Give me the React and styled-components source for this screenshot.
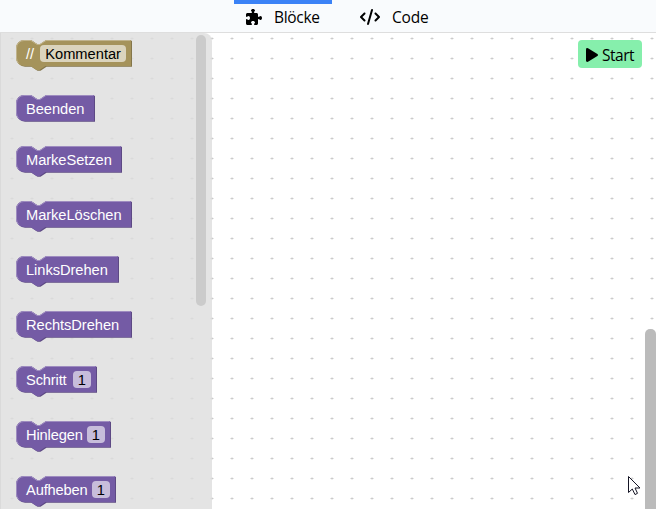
import React from "react";
import styled, { createGlobalStyle } from "styled-components";
import { FaPuzzlePiece, FaCode } from "react-icons/fa6";

const GlobalStyle = createGlobalStyle`
  * { box-sizing: border-box; }
  body { margin: 0; overflow: hidden; background: #fff; }
`;

const Page = styled.div`
  display: flex;
  flex-direction: column;
  width: 656px;
  height: 509px;
  overflow: hidden;
  font-family: "Open Sans", "Noto Sans", sans-serif;
  color: #000;
`;

const TabBar = styled.nav`
  display: flex;
  flex: none;
  gap: 16px;
  height: 33px;
  padding-left: 234px;
  background: #f9fbfd;
  border-bottom: 1px solid #dedede;
`;

const Tab = styled.button`
  display: flex;
  align-items: center;
  width: ${(p) => p.$width}px;
  height: 32px;
  padding: 0 0 1px ${(p) => p.$inset}px;
  border: 0;
  border-top: 4px solid ${(p) => (p.$active ? "#3b82f6" : "transparent")};
  background: none;
  color: inherit;
  font: 15.5px/24px "Open Sans", "Noto Sans", sans-serif;
  letter-spacing: ${(p) => p.$spacing}px;
  white-space: nowrap;
`;

const TabIcon = styled.span`
  display: flex;
  flex: none;
  justify-content: center;
  width: ${(p) => p.$width}px;
  margin: 0 ${(p) => p.$gap}px 1px 0;
  font-size: 16px;
`;

const TabLabel = styled.span`
  height: 26px;
`;

const Workspace = styled.main`
  position: relative;
  display: flex;
  flex: 1;
  min-height: 0;
  justify-content: space-between;
  background: #fff;
`;

const GridDots = styled.svg`
  position: absolute;
  inset: 0;
  width: 100%;
  height: 100%;
`;

const Flyout = styled.aside`
  position: relative;
  display: flex;
  justify-content: space-between;
  width: 211.5px;
  height: 476px;
  padding: 7px 5.5px 0 15px;
  overflow: hidden;
  background: rgba(221, 221, 221, 0.8);
  border-left: 1px solid #dadada;
  border-radius: 0 8px 0 0;
`;

const BlockList = styled.div`
  display: flex;
  flex-direction: column;
  align-items: flex-start;
  gap: 24px;
`;

const Block = styled.div`
  position: relative;
  display: flex;
  flex: none;
  align-items: flex-start;
  justify-content: space-between;
  width: ${(p) => p.$width}px;
  height: ${(p) => (p.$cap ? 27 : 31)}px;
  padding: 5px 6px 0 10px;
  color: #fff;
  font: 14.667px/18px "Liberation Sans", Arial, sans-serif;
  white-space: nowrap;
`;

const BlockShape = styled.svg`
  position: absolute;
  top: 0;
  left: 0;
  overflow: visible;
`;

const Label = styled.span`
  position: relative;
  letter-spacing: ${(p) => p.$spacing}px;
`;

const Field = styled.span`
  position: relative;
  height: 17px;
  padding: 0 5px;
  border-radius: 4px;
  background: rgba(255, 255, 255, 0.6);
  color: #000;
  line-height: 18px;
`;

const FlyoutScrollbar = styled.div`
  width: 10px;
  height: 271px;
  margin-top: -5px;
  border-radius: 5px;
  background: #cbcbcb;
`;

const Controls = styled.div`
  position: relative;
  display: flex;
  gap: 3px;
`;

const StartButton = styled.button`
  display: flex;
  align-items: center;
  width: 64px;
  height: 28px;
  margin-top: 7px;
  padding: 1px 0 0 8px;
  border: 0;
  border-radius: 4px;
  background: #86efac;
  color: #000;
  font: 15.5px/24px "Open Sans", "Noto Sans", sans-serif;
  letter-spacing: -0.5px;
`;

const PlayIcon = styled.svg`
  flex: none;
  width: 12px;
  height: 14px;
  margin: 0 4px 0 0;
`;

const WorkspaceScrollbar = styled.div`
  width: 11px;
  height: 186px;
  margin-top: 296px;
  border-radius: 5px 5px 0 0;
  background: #bbb;
`;

const Pointer = styled.svg`
  position: absolute;
  left: 628px;
  top: 443px;
  width: 13px;
  height: 20px;
`;

const purple = { fill: "#745ba5", light: "#9e8cc0", dark: "#5d4984" };
const olive = { fill: "#a5935b", light: "#c0b38c", dark: "#84764a" };

const blocks = [
  { label: "//", field: "Kommentar", width: 116, palette: olive },
  { label: "Beenden", width: 79, cap: true, palette: purple },
  { label: "MarkeSetzen", width: 106, palette: purple },
  { label: "MarkeLöschen", width: 116, palette: purple },
  { label: "LinksDrehen", width: 103, palette: purple },
  { label: "RechtsDrehen", width: 116, palette: purple },
  { label: "Schritt", field: "1", width: 81, palette: purple },
  { label: "Hinlegen", field: "1", width: 95, palette: purple },
  { label: "Aufheben", field: "1", width: 100, palette: purple },
];

function outline(w, cap) {
  const bottom = cap ? "H 8" : "H 29.5 l -6,4 -3,0 -6,-4 H 8";
  return `M 0,8 A 8,8 0 0,1 8,0 H 15 l 6,4 3,0 6,-4 H ${w} v 26 ${bottom} a 8,8 0 0,1 -8,-8 z`;
}

function CodeBlock({ label, field, width, cap, palette }) {
  const w = width - 1;
  return (
    <Block $width={width} $cap={cap}>
      <BlockShape width={width} height="31">
        <path d={outline(w, cap)} transform="translate(1,0.7)" fill={palette.dark} />
        <path d={outline(w, cap)} fill={palette.fill} />
        <path
          d={`M 2.7,23.3 A 7.5,7.5 0 0,1 0.5,18 V 8 A 7.5,7.5 0 0,1 8,0.5 H 15 l 6,4 3,0 6,-4 H ${w - 0.5}`}
          fill="none"
          stroke={palette.light}
        />
      </BlockShape>
      <Label $spacing={field === "1" ? -0.15 : -0.05}>{label}</Label>
      {field && <Field>{field}</Field>}
    </Block>
  );
}

export default function App() {
  return (
    <Page>
      <GlobalStyle />
      <TabBar>
        <Tab $active $width={98} $inset={11} $spacing={-0.3}>
          <TabIcon $width={18} $gap={11}>
            <FaPuzzlePiece />
          </TabIcon>
          <TabLabel>Blöcke</TabLabel>
        </Tab>
        <Tab $width={95} $inset={12} $spacing={-0.15}>
          <TabIcon $width={20} $gap={12}>
            <FaCode size={20} viewBox="0 0 640 512" />
          </TabIcon>
          <TabLabel>Code</TabLabel>
        </Tab>
      </TabBar>
      <Workspace>
        <GridDots>
          <defs>
            <pattern id="dots" x="10" y="3" width="20" height="20" patternUnits="userSpaceOnUse">
              <path d="M.5 2.5h3" stroke="#ccc" />
              <path d="M2 1v3" stroke="#ccc" strokeOpacity=".6" />
            </pattern>
          </defs>
          <rect width="100%" height="100%" fill="url(#dots)" />
        </GridDots>
        <Flyout>
          <BlockList>
            {blocks.map((block) => (
              <CodeBlock key={block.label} {...block} />
            ))}
          </BlockList>
          <FlyoutScrollbar />
        </Flyout>
        <Controls>
          <StartButton>
            <PlayIcon viewBox="0 0 12 14">
              <path d="M2 .2 11.4 6q1.2 1 0 2L2 13.8Q0 14.4 0 12.5V1.5Q0-.4 2 .2z" />
            </PlayIcon>
            Start
          </StartButton>
          <WorkspaceScrollbar />
        </Controls>
        <Pointer viewBox="0 0 13 20">
          <path d="M.5.5V16.5L4.3 13 7 18.6 9.5 17.3 7 12H12z" fill="#fff" stroke="#151525" />
        </Pointer>
      </Workspace>
    </Page>
  );
}
